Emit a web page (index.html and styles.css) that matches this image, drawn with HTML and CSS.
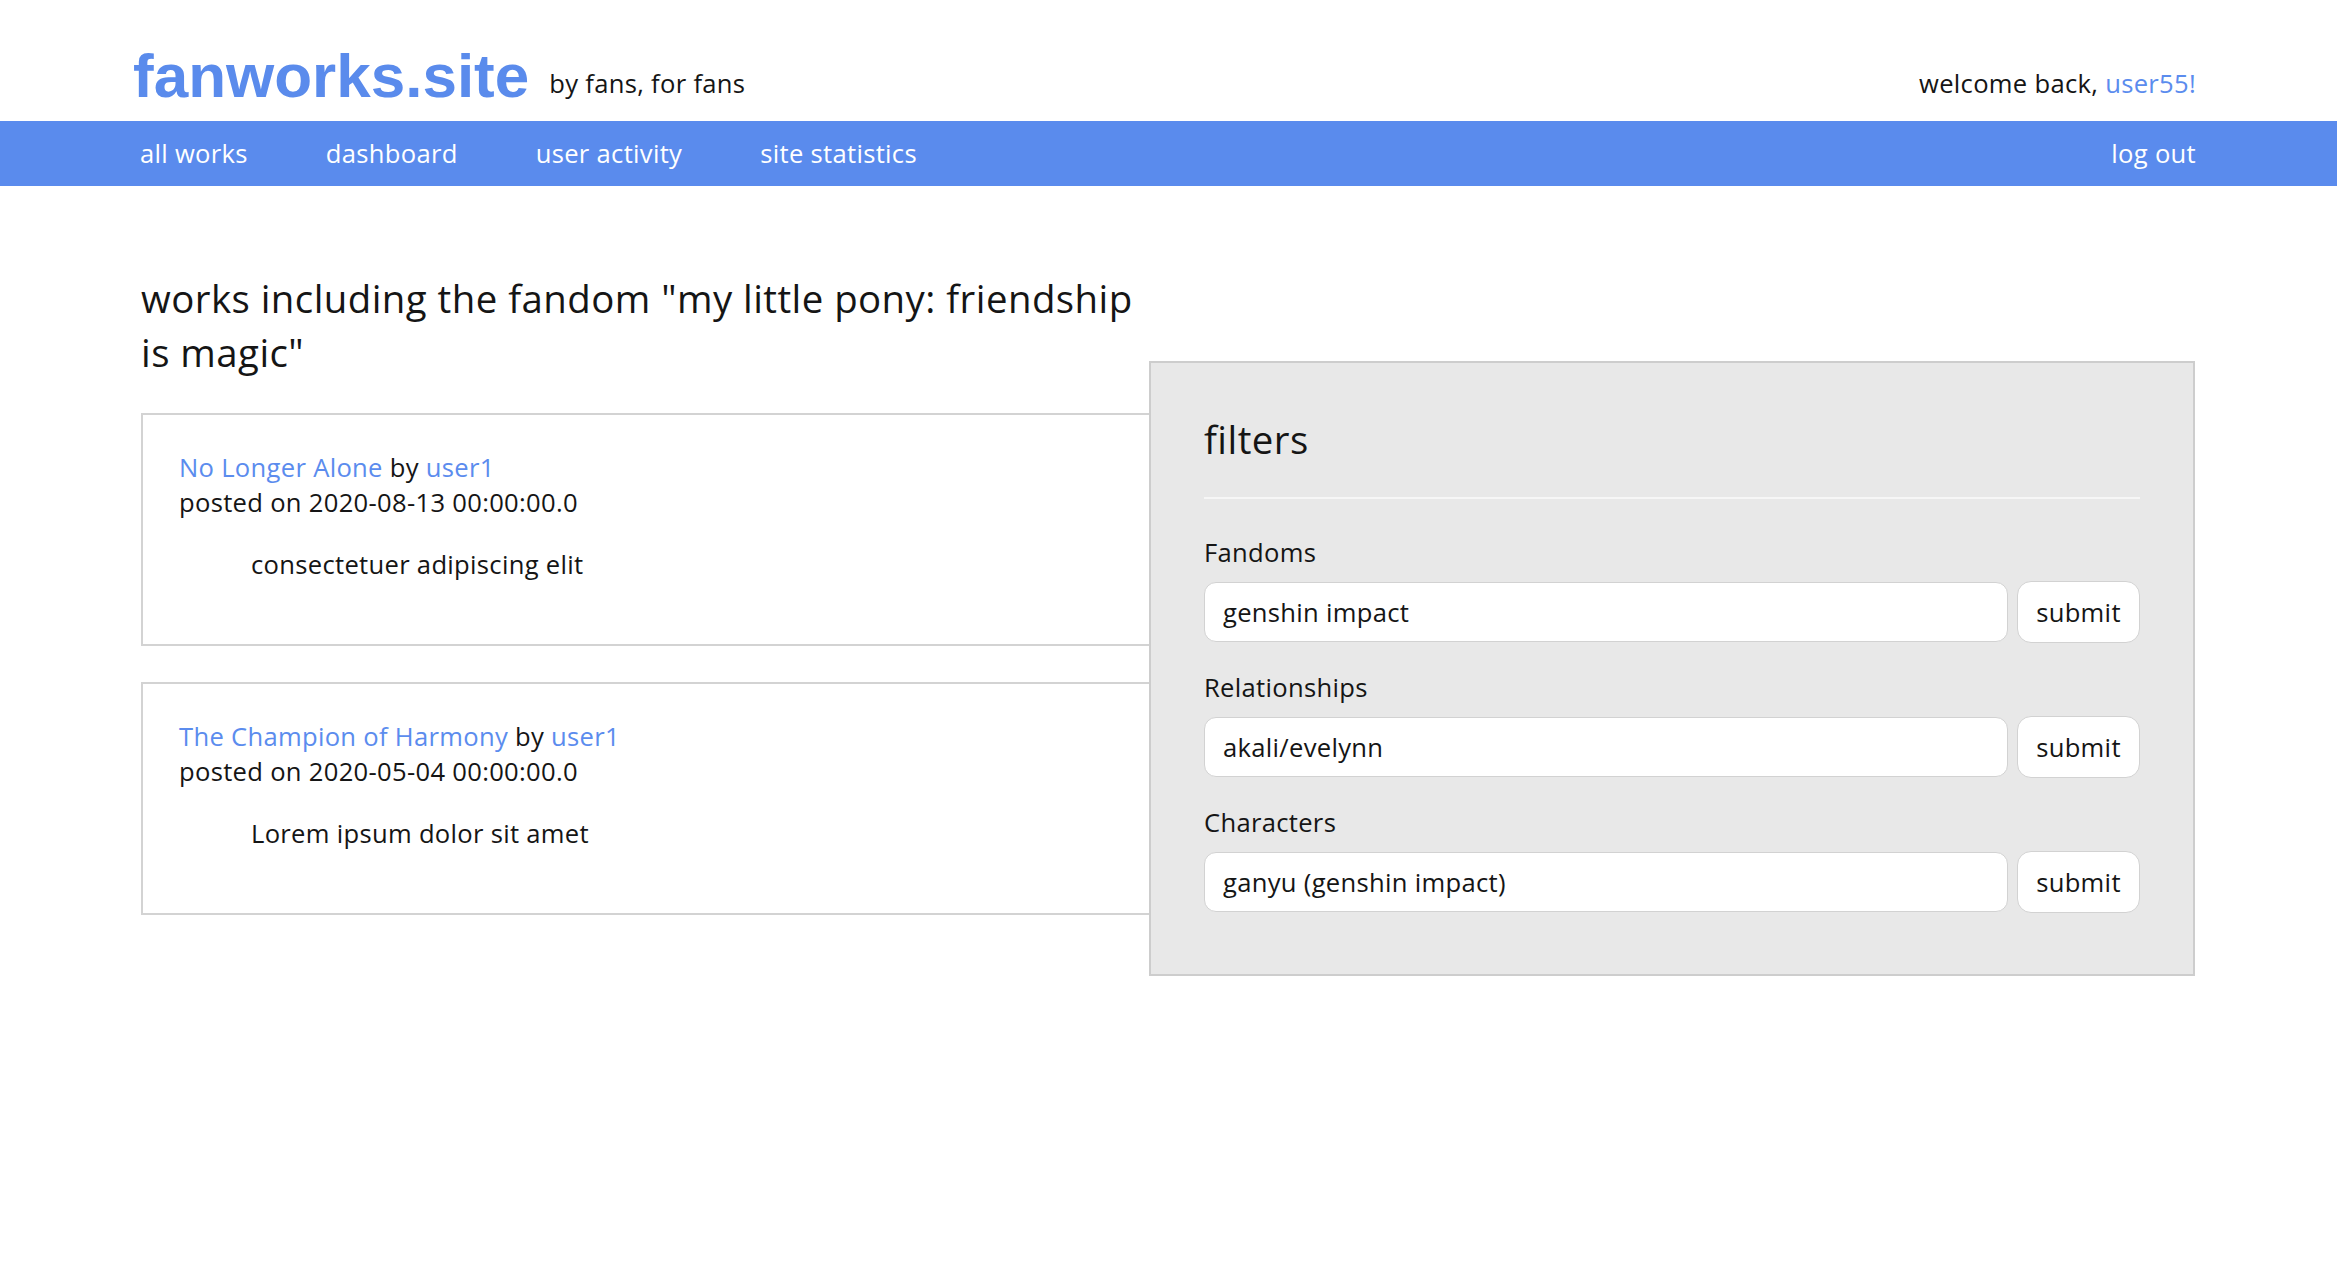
FILE: index.html
```html
<!DOCTYPE html>
<html lang="en">
<head>
<meta charset="utf-8">
<title>fanworks.site</title>
<link rel="stylesheet" href="styles.css">
</head>
<body>
<header class="header">
  <a class="logo" href="#">fanworks.site</a>
  <span class="tagline">by fans, for fans</span>
  <span class="welcome">welcome back, <a class="link" href="#">user55!</a></span>
</header>
<nav class="nav">
  <a href="#">all works</a>
  <a href="#">dashboard</a>
  <a href="#">user activity</a>
  <a href="#">site statistics</a>
  <a class="logout" href="#">log out</a>
</nav>
<main class="main">
  <section class="works">
    <h2 class="page-title">works including the fandom "my little pony: friendship is magic"</h2>
    <article class="card">
      <div><a class="link" href="#">No Longer Alone</a> by <a class="link" href="#">user1</a></div>
      <div>posted on 2020-08-13 00:00:00.0</div>
      <p class="summary">consectetuer adipiscing elit</p>
    </article>
    <article class="card">
      <div><a class="link" href="#">The Champion of Harmony</a> by <a class="link" href="#">user1</a></div>
      <div>posted on 2020-05-04 00:00:00.0</div>
      <p class="summary">Lorem ipsum dolor sit amet</p>
    </article>
  </section>
  <aside class="filters">
    <h2 class="filters-title">filters</h2>
    <hr class="divider">
    <div class="group">
      <label class="label">Fandoms</label>
      <div class="row">
        <input class="field" type="text" value="genshin impact">
        <button class="submit">submit</button>
      </div>
    </div>
    <div class="group">
      <label class="label">Relationships</label>
      <div class="row">
        <input class="field" type="text" value="akali/evelynn">
        <button class="submit">submit</button>
      </div>
    </div>
    <div class="group">
      <label class="label">Characters</label>
      <div class="row">
        <input class="field" type="text" value="ganyu (genshin impact)">
        <button class="submit">submit</button>
      </div>
    </div>
  </aside>
</main>
</body>
</html>
```
FILE: styles.css
```css
* { box-sizing: border-box; }
html, body { margin: 0; padding: 0; background: #ffffff; }
body {
  font-family: "Open Sans", "Liberation Sans", sans-serif;
  font-size: 25.6px;
  letter-spacing: 0.3px;
  line-height: normal;
  color: #151515;
}
a { text-decoration: none; }
.link { color: #5b8cee; }

.header {
  display: flex;
  align-items: flex-end;
  padding: 42px 141px 10px 133px;
  height: 121px;
}
.logo {
  font-family: "Liberation Sans", Arial, sans-serif;
  font-weight: bold;
  font-size: 62px;
  letter-spacing: 0;
  line-height: normal;
  color: #5a8bec;
}
.tagline {
  margin-left: 20px;
  margin-bottom: 10px;
}
.welcome {
  margin-left: auto;
  margin-bottom: 10px;
}

.nav {
  display: flex;
  gap: 78px;
  height: 65px;
  align-items: center;
  padding: 0 141px 0 140px;
  background: #5a8bed;
}
.nav a { color: #ffffff; }
.nav .logout { margin-left: auto; }

.main {
  display: flex;
  align-items: flex-start;
  padding: 85px 142px 0 141px;
}
.works {
  width: 1008px;
  flex: none;
}
.page-title {
  font-size: 38.4px;
  font-weight: normal;
  letter-spacing: 0.45px;
  line-height: 54px;
  margin: 0 0 34px 0;
  max-width: 1005px;
}
.card {
  width: 1120px;
  height: 233px;
  border: 2px solid #d3d3d3;
  padding: 35px 36px 0 36px;
  margin-bottom: 36px;
  background: #ffffff;
}
.summary {
  margin: 27px 0 0 72px;
}

.filters {
  position: relative;
  z-index: 1;
  flex: none;
  width: 1046px;
  margin-top: 90px;
  background: #e8e8e8;
  border: 2px solid #cdcdcd;
  padding: 50px 53px 61px 53px;
}
.filters-title {
  font-size: 38.4px;
  font-weight: normal;
  letter-spacing: 0.45px;
  line-height: 52.3px;
  margin: 0;
}
.divider {
  border: none;
  height: 2px;
  background: #f6f6f6;
  margin: 32px 0 36px 0;
}
.group { margin-bottom: 27px; }
.group:last-child { margin-bottom: 0; }
.label { display: block; margin-bottom: 11px; }
.row {
  display: flex;
  align-items: center;
  gap: 9px;
}
.field {
  flex: 1;
  height: 60px;
  border: 1.5px solid #d2d2d2;
  border-radius: 12px;
  padding: 0 18px;
  font-family: "Open Sans", sans-serif;
  font-size: 25.6px;
  letter-spacing: 0.3px;
  color: #151515;
  background: #ffffff;
  outline: none;
}
.submit {
  width: 123px;
  height: 62px;
  border: 1.5px solid #d2d2d2;
  border-radius: 14px;
  background: #ffffff;
  font-family: "Open Sans", sans-serif;
  font-size: 25.6px;
  letter-spacing: 0.3px;
  color: #151515;
  padding: 0;
}
```
